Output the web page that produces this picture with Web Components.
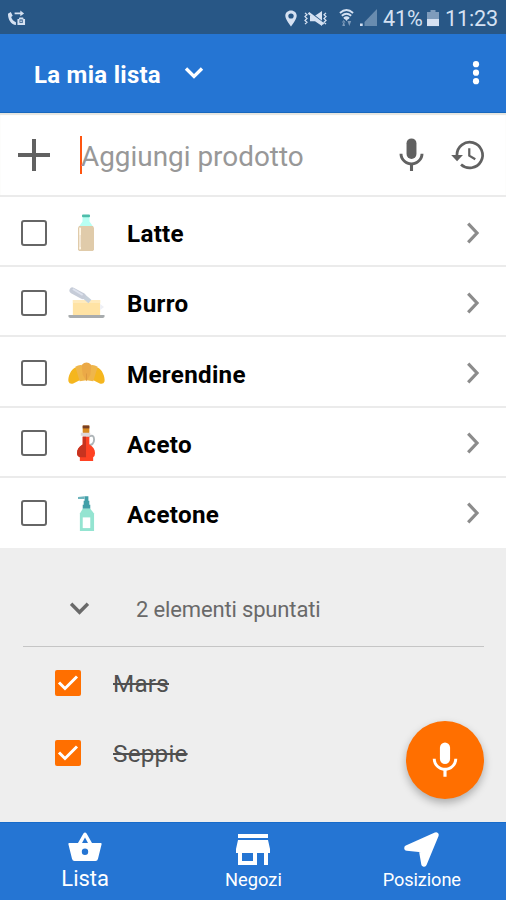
<!DOCTYPE html>
<html lang="it">
<head>
<meta charset="utf-8">
<title>La mia lista</title>
<style>
html,body{margin:0;padding:0}
body{width:506px;height:900px;overflow:hidden;font-family:Roboto,"Liberation Sans",sans-serif;background:#eee}
</style>
</head>
<body>
<shopping-app></shopping-app>
<script>
const define = (name, html, init) => {
  const template = document.createElement('template');
  template.innerHTML = html;
  customElements.define(name, class extends HTMLElement {
    constructor() {
      super();
      this.attachShadow({mode: 'open'}).appendChild(template.content.cloneNode(true));
    }
    connectedCallback() { if (init) init(this); }
  });
};

const MIC = '<rect x="9.1" y="2" width="5.8" height="12" rx="2.9"/><path d="M17.3 11c0 3-2.54 5.1-5.3 5.1S6.7 14 6.7 11H5c0 3.41 2.72 6.23 6.1 6.72V21h1.8v-3.28c3.38-.48 6.1-3.3 6.1-6.72z"/>';

const ICONS = {
  call: ['0 0 20 18', '<path d="M1 4l3-2 2 4-1.600 1.500c.8 2.500 2.500 4.500 5 5.500V16C4.500 15.500 1 10.500 1 4z"/><path d="M8 2.600h6V.6l4 3-4 3V4.600H8z"/><path d="M11 9.500h1.500L13 8h4l.5 1.500H19V16h-8z"/><rect x="13.200" y="10" width="3.300" height="3.800" fill="#285786"/><path d="M14 11h1.600v2H14z"/>'],
  pin: ['0 0 12 18', '<path fill-rule="evenodd" d="M6 .5C2.700.5.300 2.900.300 6.100.300 10 6 17.500 6 17.500s5.700-7.500 5.700-11.400C11.700 2.900 9.300.5 6 .5zm0 3.100a2.700 2.700 0 1 1 0 5.400 2.700 2.700 0 0 1 0-5.400z"/>'],
  mute: ['0 0 26 18', '<path d="M7 6h5l7-5v16l-7-5H7z"/><path d="M5 1l17 14" stroke="#285786" stroke-width="2"/><path d="M5.500 3l15 12" stroke="currentColor" stroke-width="2.400"/><path d="M2 3l2 2-2 2 2 2-2 2 2 2-2 2M23 3l-2 2 2 2-2 2 2 2-2 2 2 2" fill="none" stroke="currentColor" stroke-width="1.300"/>'],
  wifi: ['0 0 16 18', '<path d="M1 4q7-6 14 0M3 6.800q5-4 10 0M5.200 9.500q2.800-2.300 5.600 0" fill="none" stroke="currentColor" stroke-width="2"/><path d="M5.500 9h5L8 12z"/><path d="M3 13.500h4L5 11zM3.500 17l1.500-5 1.500 5zM9 12l2 5 2-5z" opacity=".5"/>'],
  signal: ['0 0 17 18', '<path d="M17 0v17H4.500v-4z" opacity=".38"/><path d="M0 14.500h2.700V17H0z"/>'],
  battery: ['0 0 12 18', '<path d="M3.500 0h5v2H12v8H0V2h3.500z" opacity=".5"/><path d="M0 9.500h12V17H0z"/>'],
  down: ['0 0 20 14', '<path d="M2 2.500l8 8 8-8" fill="none" stroke="currentColor" stroke-width="3.300"/>'],
  right: ['0 0 14 22', '<path d="M2.200 1.700l8.800 9.300-8.800 9.300" fill="none" stroke="currentColor" stroke-width="3.200"/>'],
  more: ['0 0 8 26', '<circle cx="4" cy="4.200" r="3.100"/><circle cx="4" cy="12.700" r="3.100"/><circle cx="4" cy="21.200" r="3.100"/>'],
  plus: ['0 0 32 32', '<path d="M14 0h4v14h14v4H18v14h-4V18H0v-4h14z"/>'],
  mic: ['0 0 24 24', MIC],
  history: ['0 0 24 24', '<path d="M1.400 12h7.400l-3.700 3.900z"/><path d="M5 12a8.100 8.100 0 1 1 2.600 6" fill="none" stroke="currentColor" stroke-width="1.700"/><path d="M12.800 7.800v4.600l3.800 2.300" fill="none" stroke="currentColor" stroke-width="1.400"/>'],
  basket: ['0 0 34 30', '<path fill-rule="evenodd" d="M10 11L15.400 1.600Q17-.4 18.600 1.600L24 11h8.800q1 0 .8 1.200L30 26.800Q29.500 29 27.500 29h-21Q4.500 29 4 26.800L.4 12.200Q.2 11 1.200 11zm4 0h6l-3-5.600zm3 5.500a3.200 3.200 0 1 0 0 6.400 3.200 3.200 0 0 0 0-6.400z"/>'],
  store: ['0 0 34 32', '<path fill-rule="evenodd" d="M2 0h30v4H2zm0 6h30l2 9v4h-2v12h-4V19h-7v12H2V19H0v-4zM6 19v8h11v-8z"/>'],
  arrow: ['0 0 36 36', '<path d="M3 16.500L32 3 20 33 17.500 18z" stroke="currentColor" stroke-width="5.500" stroke-linejoin="round"/>'],
  milk: ['0 0 18 38', '<path fill="#b8fff2" d="M5.500 3h7v4.500L16 12.500V17H2v-4.500l3.500-5z"/><rect x="5" y=".5" width="8" height="2.800" rx="1" fill="#4dbdaa"/><path fill="#e0cbaa" d="M2 12h14l1 2v21.500L16 37H2l-1-1.500V14z"/><path fill="#f3e7d5" d="M2 13.500h2v22H2z"/><path fill="#fff7e5" d="M2.500 14h1.500v7H2.500zM2.500 33H4v2H2.500z"/>'],
  butter: ['0 0 38 34', '<path fill="#ffe3a4" d="M5 14h28v16H5z"/><path fill="#ffeabb" d="M5 14h28v3H5z"/><path fill="#eef0f5" d="M33 18l4 3-4 3z"/><path d="M14 8.500l8.500 7" stroke="#c6d0da" stroke-width="4.500"/><path d="M4.500 4.500L15 10" stroke="#c6ccd8" stroke-width="6" stroke-linecap="round"/><path d="M5 3l10 6" stroke="#dde2ed" stroke-width="2"/><path fill="#a8acae" d="M.5 29h37v2l-1.500 1H2l-1.500-1z"/>'],
  croissant: ['0 0 38 24', '<path fill="#f5b61e" d="M7 6C3 8 0 15 .4 20q1 3.600 5 2.500l8.600-4.500 2-13zM31 6c4 2 7 9 6.600 14q-1 3.600-5 2.500L24 18 22 5z"/><path fill="#efb64b" d="M7.500 5q5-3 8-1l3.500 15-7 1zM30.500 5q-5-3-8-1L19 19l7 1z"/><path fill="#eba947" d="M14 3q5-5 10 0l-1 10-4 7-4-7z"/><path d="M19 12v7" stroke="#db9740"/>'],
  vinegar: ['0 0 20 38', '<path d="M12 12q6-3 6 3t-7 6" fill="none" stroke="#aeb5b8" stroke-width="2"/><rect x="6" y=".5" width="7" height="8" rx="1" fill="#d88920"/><path fill="#794024" d="M6 .5h7v3H6z"/><path fill="#ddd7da" d="M4 8h10v3h-1v2H6v-2H4z"/><path fill="#ff4223" d="M6 12h7v8c4 2 6 5 6 9q0 3-2 4v4H3v-4q-3-1-3-4c0-4 2-7 6-9z"/><path fill="#c7331f" d="M6 12h3.500v21H3q-3-1-3-4c0-4 2-7 6-9z"/>'],
  soap: ['0 0 18 38', '<path fill="#429fa8" d="M7 1.200h4V6h1v4h1v4H5v-4h1V6h1z"/><path fill="#6fb5bd" d="M0 2l7-.8V4H0z"/><path fill="#94e4d1" d="M5 14h8l4 5v18H2V19z"/><path fill="#fff" d="M5 23h8v11H5z"/>'],
  tick: ['0 0 26 26', '<path d="M4 12.500l6 6L22 6.500" fill="none" stroke="currentColor" stroke-width="3"/>']
};

define('app-icon', '<style>:host{display:block;flex:none}svg{display:block;width:100%;height:100%;overflow:visible;fill:currentColor}</style><svg preserveAspectRatio="none"></svg>', el => {
  const [box, art] = ICONS[el.getAttribute('name')];
  const svg = el.shadowRoot.querySelector('svg');
  svg.setAttribute('viewBox', box);
  svg.innerHTML = art;
  el.style.width = el.getAttribute('w') + 'px';
  el.style.height = el.getAttribute('h') + 'px';
});

define('status-bar', `<style>
:host{display:flex;align-items:center;height:34px;box-sizing:border-box;padding:2px 8px 0 7px;background:#285786;color:#d5e1f2;font-size:21.600px}
.space{flex:1}.t{line-height:34px;letter-spacing:-.15px;white-space:nowrap;margin-top:1px}
</style>
<app-icon name="call" w="19" h="17"></app-icon><span class="space"></span>
<app-icon name="pin" w="12" h="17"></app-icon>
<app-icon name="mute" w="26" h="17" style="margin-left:6px"></app-icon>
<app-icon name="wifi" w="15" h="18" style="margin-left:10px"></app-icon>
<app-icon name="signal" w="17" h="18" style="margin-left:6px"></app-icon>
<span class="t" style="margin-left:6px;width:39px">41%</span>
<app-icon name="battery" w="12" h="17" style="margin-left:5px"></app-icon>
<span class="t" style="margin-left:6px;width:53px">11:23</span>`);

define('title-bar', `<style>
:host{display:flex;align-items:center;height:79px;box-sizing:border-box;padding:0 26px 0 34px;background:#2575d3;color:#fff;border-bottom:1px solid #1767bd}
h1{margin:3px 0 0;width:150px;font:700 24px/34px Roboto,sans-serif;letter-spacing:.27px}
.space{flex:1}
</style><h1><slot></slot></h1><app-icon name="down" w="20" h="14"></app-icon><span class="space"></span><app-icon name="more" w="8" h="26"></app-icon>`);

define('add-row', `<style>
:host{display:flex;align-items:center;height:84px;box-sizing:border-box;padding:2px 19px 0 18px;background:#fff;border-bottom:2px solid #ebebeb;color:#616161;box-shadow:inset 0 2px 1px #e6e5df}
.caret{width:2px;height:38px;background:#ff5510;margin:-1px 0 0 29.500px}
.hint{flex:1;color:#989898;font-size:27.900px;line-height:40px;margin:3px 0 0 -.5px;white-space:nowrap}
</style><app-icon name="plus" w="32" h="32"></app-icon><span class="caret"></span><span class="hint"><slot></slot></span><app-icon name="mic" w="41" h="41"></app-icon><app-icon name="history" w="38" h="38" style="margin-left:17px"></app-icon>`);

define('check-box', `<style>
:host{display:block;flex:none;box-sizing:border-box;width:26px;height:26px;border:2px solid #666;border-radius:3px}
:host([checked]){border:0;border-radius:2px;background:#ff6f00;color:#fff}
app-icon{display:none}:host([checked]) app-icon{display:block}
</style><app-icon name="tick" w="26" h="26"></app-icon>`);

define('product-row', `<style>
:host{display:flex;align-items:center;flex:1;box-sizing:border-box;padding:3px 26px 0 21px;background:#fff;border-bottom:2px solid #ebebeb;color:#000}
:host(:last-child){border-bottom-color:#fff}
.art{width:40px;margin-left:19px;display:flex;justify-content:center}
.name{flex:1;margin:3px 0 0 21px;font-weight:700;font-size:24.200px;line-height:32px;letter-spacing:.3px}
.go{color:#8c8c8c}
</style><check-box></check-box><span class="art"><slot name="art"></slot></span><span class="name"><slot></slot></span><app-icon class="go" name="right" w="14" h="22"></app-icon>`);

define('checked-header', `<style>
:host{display:flex;align-items:center;box-sizing:border-box;height:99px;margin:0 22px 0 23px;padding:23px 0 0 46px;border-bottom:1.500px solid #c5c5c5;color:#696969;font-size:22px;letter-spacing:-.15px}
span{margin:1px 0 0 46px}
</style><app-icon name="down" w="21" h="15"></app-icon><span><slot></slot></span>`);

define('checked-row', `<style>
:host{display:flex;align-items:center;height:70.300px;padding-left:55px;color:#505050;font-size:24.300px;letter-spacing:.2px}
check-box{margin-top:1px}
span{margin:3px 0 0 32px;text-decoration:line-through;text-decoration-thickness:1.500px}
</style><check-box checked></check-box><span><slot></slot></span>`);

define('mic-button', `<style>
:host{position:absolute;right:22px;bottom:101px;width:78px;height:78px;border-radius:50%;background:#ff6f00;color:#fff;display:flex;align-items:center;justify-content:center;box-shadow:0 4px 9px rgba(0,0,0,.28)}
</style><app-icon name="mic" w="42" h="43"></app-icon>`);

define('nav-item', `<style>
:host{flex:1;display:flex;flex-direction:column;align-items:center;color:#fff;white-space:nowrap}
.i{height:34px;display:flex;align-items:center}
.label{line-height:28px}
</style><span class="i"><slot name="icon"></slot></span><span class="label"><slot></slot></span>`);

define('bottom-nav', '<style>:host{display:flex;height:78px;box-sizing:border-box;padding-left:1px;background:#2575d3;border-top:1px solid #176bca}</style><slot></slot>');

define('shopping-app', `<style>
:host{position:relative;display:flex;flex-direction:column;width:506px;height:900px;background:#eee}
.list{display:flex;flex-direction:column;height:351px}.rest{flex:1}
nav-item{box-sizing:border-box;padding-top:9px}
.first{padding-top:8px}
</style>
<status-bar></status-bar><title-bar>La mia lista</title-bar><add-row>Aggiungi prodotto</add-row>
<div class="list">
<product-row><app-icon slot="art" name="milk" w="18" h="38"></app-icon>Latte</product-row>
<product-row><app-icon slot="art" name="butter" w="37" h="34"></app-icon>Burro</product-row>
<product-row><app-icon slot="art" name="croissant" w="37" h="23"></app-icon>Merendine</product-row>
<product-row><app-icon slot="art" name="vinegar" w="19" h="37"></app-icon>Aceto</product-row>
<product-row><app-icon slot="art" name="soap" w="17" h="37"></app-icon>Acetone</product-row>
</div>
<div class="rest"><checked-header>2 elementi spuntati</checked-header><checked-row>Mars</checked-row><checked-row>Seppie</checked-row></div>
<bottom-nav>
<nav-item class="first" style="font-size:22px"><app-icon slot="icon" name="basket" w="34" h="30" style="margin-bottom:2px"></app-icon>Lista</nav-item>
<nav-item style="font-size:18.300px"><app-icon slot="icon" name="store" w="34" h="32" style="margin-top:2px"></app-icon>Negozi</nav-item>
<nav-item style="font-size:18.200px;letter-spacing:-.1px"><app-icon slot="icon" name="arrow" w="36" h="35" style="margin-left:1px"></app-icon>Posizione</nav-item>
</bottom-nav>
<mic-button></mic-button>`);
</script>
</body>
</html>
